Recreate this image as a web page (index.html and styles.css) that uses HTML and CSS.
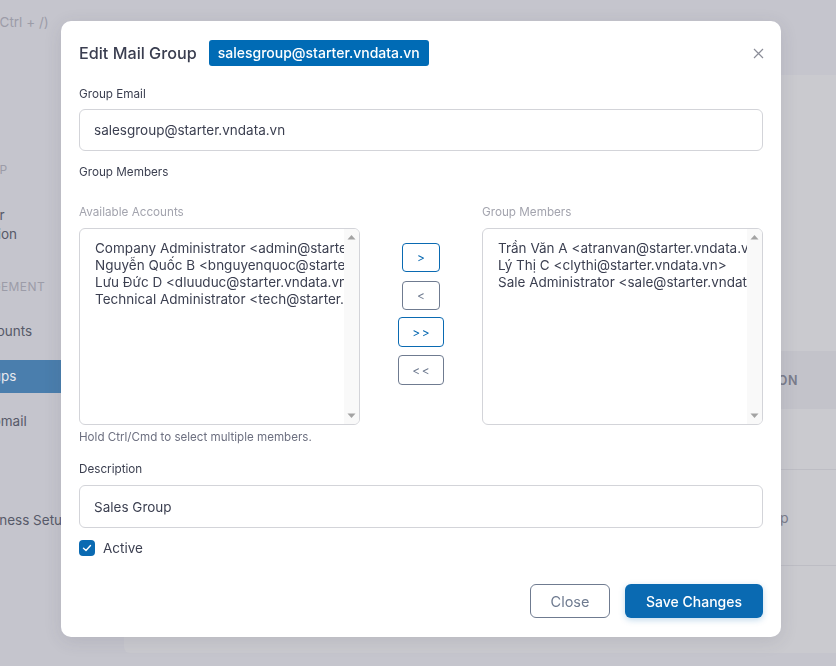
FILE: index.html
```html
<!DOCTYPE html>
<html lang="en">
<head>
    <meta charset="UTF-8">
    <meta name="viewport" content="width=device-width, initial-scale=1.0">
    <title>Mail Groups</title>
    <link rel="stylesheet" href="styles.css">
</head>
<body>

    <div class="app">
        <aside class="sidebar">
            <div class="search-hint">Search (Ctrl + /)</div>
            <div class="nav-head head-first">BACKUP</div>
            <div class="nav-item two-line">Other<br>Section</div>
            <div class="nav-head head-second">MANAGEMENT</div>
            <div class="nav-item">Accounts</div>
            <div class="nav-item active">Groups</div>
            <div class="nav-item">Webmail</div>
            <div class="nav-item">Log</div>
            <div class="nav-item extra">Business Setup</div>
        </aside>

        <main class="main">
            <div class="card">
                <div class="card-top"></div>
                <div class="table-row table-head">
                    <div>GROUP EMAIL</div>
                    <div>DESCRIPTION</div>
                </div>
                <div class="table-row">
                    <div>admin@starter.vndata.vn</div>
                    <div>Admins</div>
                </div>
                <div class="table-row tall">
                    <div>salesgroup@starter.vndata.vn</div>
                    <div>Sales Group</div>
                </div>
            </div>
        </main>
    </div>

    <!-- Edit modal -->
    <div class="modal">
        <div class="modal-header">
            <h2 class="modal-title">Edit Mail Group</h2>
            <span class="badge">salesgroup@starter.vndata.vn</span>
            <button class="close-x" aria-label="Close">
                <svg width="11" height="11" viewBox="0 0 11 11">
                    <path d="M1 1 L10 10 M10 1 L1 10" stroke="#8b8d98" stroke-width="1.2" fill="none"/>
                </svg>
            </button>
        </div>

        <label class="field-label first">Group Email</label>
        <input class="text-input" type="text" value="salesgroup@starter.vndata.vn">

        <div class="field-label members-label">Group Members</div>

        <div class="dual-list">
            <div class="list-col">
                <div class="sub-label">Available Accounts</div>
                <div class="list-box">
                    <div class="list-items">
                        <div class="list-item">Company Administrator &lt;admin@starter.vndata.vn&gt;</div>
                        <div class="list-item">Nguyễn Quốc B &lt;bnguyenquoc@starter.vndata.vn&gt;</div>
                        <div class="list-item">Lưu Đức D &lt;dluuduc@starter.vndata.vn&gt;</div>
                        <div class="list-item">Technical Administrator &lt;tech@starter.vndata.vn&gt;</div>
                    </div>
                    <div class="scrollbar">
                        <svg width="15" height="14" viewBox="0 0 15 14"><path d="M3.5 9.5 L7.5 5 L11.5 9.5 Z" fill="#a3a3a3"/></svg>
                        <svg width="15" height="14" viewBox="0 0 15 14"><path d="M3.5 4.5 L7.5 9 L11.5 4.5 Z" fill="#a3a3a3"/></svg>
                    </div>
                </div>
            </div>
            <div class="move-buttons">
                <button class="move-btn blue">&gt;</button>
                <button class="move-btn gray">&lt;</button>
                <button class="move-btn blue wide">&gt;&gt;</button>
                <button class="move-btn gray wide">&lt;&lt;</button>
            </div>
            <div class="list-col">
                <div class="sub-label">Group Members</div>
                <div class="list-box">
                    <div class="list-items">
                        <div class="list-item">Trần Văn A &lt;atranvan@starter.vndata.vn&gt;</div>
                        <div class="list-item">Lý Thị C &lt;clythi@starter.vndata.vn&gt;</div>
                        <div class="list-item">Sale Administrator &lt;sale@starter.vndata.vn&gt;</div>
                    </div>
                    <div class="scrollbar">
                        <svg width="15" height="14" viewBox="0 0 15 14"><path d="M3.5 9.5 L7.5 5 L11.5 9.5 Z" fill="#a3a3a3"/></svg>
                        <svg width="15" height="14" viewBox="0 0 15 14"><path d="M3.5 4.5 L7.5 9 L11.5 4.5 Z" fill="#a3a3a3"/></svg>
                    </div>
                </div>
            </div>
        </div>
        <div class="hint">Hold Ctrl/Cmd to select multiple members.</div>

        <label class="field-label desc-label">Description</label>
        <input class="text-input desc-input" type="text" value="Sales Group">

        <div class="check-row">
            <span class="check-box">
                <svg width="10" height="8" viewBox="0 0 10 8">
                    <path d="M1.5 4.2 L4 6.5 L8.5 1.5" stroke="#fff" stroke-width="1.4" fill="none" stroke-linecap="round" stroke-linejoin="round"/>
                </svg>
            </span>
            <span class="check-text">Active</span>
        </div>

        <div class="modal-footer">
            <button class="btn btn-outline">Close</button>
            <button class="btn btn-primary">Save Changes</button>
        </div>
    </div>

</body>
</html>
```

FILE: styles.css
```css
* {
    box-sizing: border-box;
}

body {
    margin: 0;
    width: 836px;
    height: 666px;
    overflow: hidden;
    background-color: #c5c5cd;
    font-family: Inter, "Noto Sans", sans-serif;
    color: #3b3f50;
}

.app {
    display: flex;
    height: 100vh;
}

/* Sidebar (dimmed under the modal) */
.sidebar {
    width: 150px;
    margin-left: -40px;
    padding: 12px 0 0 12px;
    flex-shrink: 0;
    background-color: #c5c5cd;
    font-size: 13.5px;
    color: #575a69;
}

.search-hint {
    height: 20px;
    line-height: 20px;
    margin-left: -26px;
    color: #9c9ca8;
    white-space: nowrap;
}

.nav-head {
    height: 16px;
    line-height: 16px;
    font-size: 12px;
    letter-spacing: 0.4px;
    color: #9c9ca8;
    white-space: nowrap;
}

.head-first {
    margin-top: 130px;
    margin-left: -16px;
}

.head-second {
    margin-top: 35px;
    margin-left: -18px;
    margin-bottom: 20px;
}

.nav-item {
    height: 33px;
    line-height: 33px;
    margin: 12px 0;
    white-space: nowrap;
}

.nav-item.two-line {
    height: 38px;
    line-height: 19px;
    margin: 28px 0 0 -3px;
}

.nav-item.active {
    margin-left: -12px;
    padding-left: 10px;
    background-color: #4a7ead;
    color: #e6e8ee;
}

.nav-item.extra {
    margin-top: 21px;
}

/* Main content */
.main {
    flex: 1;
    overflow: hidden;
    padding: 75px 0 0 14px;
}

.card {
    width: 820px;
    height: 578px;
    background-color: #cacacf;
    border-radius: 6px;
}

.card-top {
    height: 276px;
}

.table-row {
    display: grid;
    grid-template-columns: 584px 1fr;
    height: 61px;
    align-items: center;
    border-bottom: 1px solid #bdbdc4;
    font-size: 14px;
    color: #7c7e8c;
}

.table-row.tall {
    height: 96px;
}

.table-head {
    height: 58px;
    background-color: #c3c3ca;
    border-bottom: none;
    font-size: 12.5px;
    font-weight: 600;
    letter-spacing: 0.5px;
    color: #7a7c8a;
}

/* Modal */
.modal {
    position: fixed;
    top: 21px;
    left: 61px;
    width: 720px;
    padding: 19px 18px 19px 18px;
    background-color: #fff;
    border-radius: 10px;
    box-shadow: 0 4px 18px rgba(60, 60, 80, 0.12);
}

.modal-header {
    display: flex;
    align-items: center;
    height: 26px;
}

.modal-title {
    margin: 0 12px 0 0;
    font-size: 16.2px;
    font-weight: 500;
    color: #3a3e50;
}

.badge {
    height: 26px;
    line-height: 26px;
    padding: 0 9px;
    border-radius: 3px;
    background-color: #006bb5;
    color: #fff;
    font-size: 14px;
    font-weight: 500;
}

.close-x {
    margin-left: auto;
    margin-right: -1px;
    padding: 0;
    border: none;
    background: none;
    display: flex;
}

.field-label {
    display: block;
    height: 16px;
    line-height: 17px;
    font-size: 11.7px;
    color: #3b3f50;
    margin-bottom: 7px;
}

.field-label.first {
    margin-top: 20px;
}

.members-label {
    margin-top: 13px;
    margin-bottom: 0;
}

.text-input {
    display: block;
    width: 100%;
    height: 42px;
    padding: 0 14px;
    border: 1px solid #d3d4d9;
    border-radius: 6px;
    font-family: Inter, "Noto Sans", sans-serif;
    font-size: 13.5px;
    color: #3b3f50;
    outline: none;
}

.dual-list {
    display: grid;
    grid-template-columns: 281px 1fr 281px;
    margin-top: 24px;
}

.sub-label {
    height: 16px;
    line-height: 17px;
    font-size: 11.7px;
    color: #a3a4ae;
    margin-bottom: 8px;
}

.list-box {
    display: flex;
    height: 197px;
    border: 1px solid #d3d4d9;
    border-radius: 6px;
    overflow: hidden;
}

.list-items {
    flex: 1;
    min-width: 0;
    padding: 11px 0 0 15px;
    overflow: hidden;
    font-size: 13.5px;
    color: #3b3f50;
}

.list-item {
    height: 17px;
    line-height: 17px;
    white-space: nowrap;
}

.scrollbar {
    width: 15px;
    flex-shrink: 0;
    display: flex;
    flex-direction: column;
    justify-content: space-between;
    padding: 1px 0;
    background-color: #f9f9f9;
}

.move-buttons {
    display: flex;
    flex-direction: column;
    align-items: center;
    gap: 9px;
    padding-top: 39px;
}

.move-btn {
    width: 38px;
    height: 29px;
    padding: 0;
    border-radius: 4px;
    background: #fff;
    font-family: Inter, "Noto Sans", sans-serif;
    font-size: 12px;
    cursor: pointer;
}

.move-btn.wide {
    width: 46px;
    height: 30px;
    letter-spacing: 1.5px;
    text-indent: 1.5px;
}

.move-btn.blue.wide {
    margin-top: -2px;
}

.move-btn.gray.wide {
    margin-top: -1px;
}

.move-btn.blue {
    border: 1px solid #0a6ab2;
    color: #0a6ab2;
}

.move-btn.gray {
    border: 1px solid #6f7b90;
    color: #6f7b90;
}

.hint {
    margin-top: 4px;
    height: 16px;
    line-height: 16px;
    font-size: 11.6px;
    color: #6d7080;
}

.desc-label {
    margin-top: 16px;
    margin-bottom: 8px;
}

.desc-input {
    height: 43px;
}

.check-row {
    display: flex;
    align-items: center;
    margin-top: 12px;
    height: 16px;
}

.check-box {
    width: 16px;
    height: 16px;
    border-radius: 4px;
    background-color: #0a6ab2;
    display: flex;
    align-items: center;
    justify-content: center;
}

.check-text {
    margin-left: 8px;
    font-size: 13.5px;
    color: #3b3f50;
}

.modal-footer {
    display: flex;
    justify-content: flex-end;
    gap: 15px;
    margin-top: 28px;
}

.btn {
    height: 34px;
    border-radius: 6px;
    font-family: Inter, "Noto Sans", sans-serif;
    font-size: 14.5px;
    cursor: pointer;
}

.btn-outline {
    width: 80px;
    border: 1px solid #6f7b90;
    background: #fff;
    color: #6f7b90;
}

.btn-primary {
    width: 138px;
    border: none;
    background-color: #0a6ab2;
    color: #fff;
    font-size: 14px;
    font-weight: 500;
    box-shadow: 0 2px 6px rgba(10, 106, 178, 0.25);
}
```
